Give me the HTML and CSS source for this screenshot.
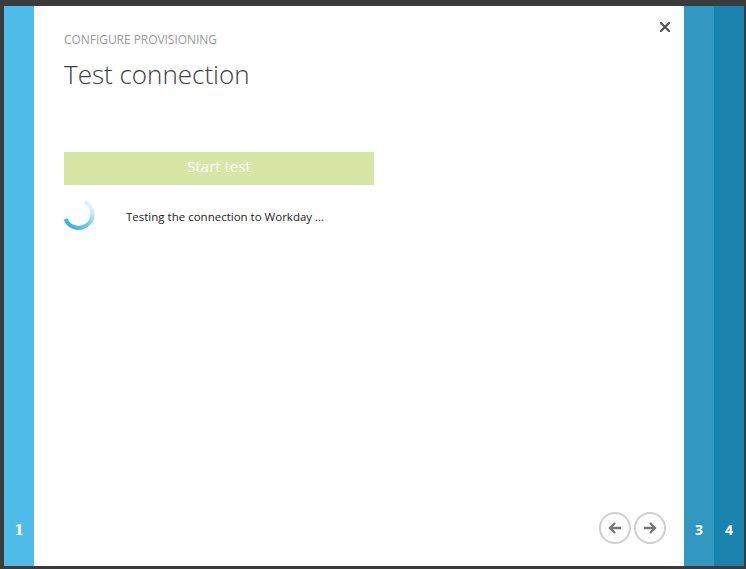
FILE: index.html
```html
<!DOCTYPE html>
<html>
<head>
<meta charset="utf-8">
<link rel="stylesheet" href="styles.css">
</head>
<body>
<div class="frame">
  <div class="step step-1"><span class="num">1</span></div>
  <div class="content">
    <button class="close" aria-label="Close">
      <svg width="10" height="10" viewBox="0 0 10 10"><path d="M1 1 L9 9 M9 1 L1 9" stroke="#555" stroke-width="2.2" stroke-linecap="square"/></svg>
    </button>
    <div class="eyebrow">CONFIGURE PROVISIONING</div>
    <h1 class="title">Test connection</h1>
    <button class="start">Start test</button>
    <div class="status">
      <svg class="spinner" width="36" height="36" viewBox="0 0 36 36">
        <defs>
          <linearGradient id="g" x1="1" y1="0" x2="0" y2="1">
            <stop offset="0" stop-color="#4cc0ee" stop-opacity="0"/>
            <stop offset="0.5" stop-color="#4cc0ee" stop-opacity="0.8"/>
            <stop offset="1" stop-color="#29a8e6"/>
          </linearGradient>
        </defs>
        <path d="M23 4.5 A14 14 0 1 1 3.5 22" fill="none" stroke="url(#g)" stroke-width="4"/>
      </svg>
      <span class="status-text">Testing the connection to Workday ...</span>
    </div>
    <div class="spacer"></div>
    <div class="nav">
      <button class="nav-btn" aria-label="Back">
        <svg width="16" height="16" viewBox="0 0 16 16"><path d="M14 8 H3 M8 3 L3 8 L8 13" fill="none" stroke="#777" stroke-width="2.4"/></svg>
      </button>
      <button class="nav-btn" aria-label="Next">
        <svg width="16" height="16" viewBox="0 0 16 16"><path d="M2 8 H13 M8 3 L13 8 L8 13" fill="none" stroke="#777" stroke-width="2.4"/></svg>
      </button>
    </div>
  </div>
  <div class="step step-3"><span class="num">3</span></div>
  <div class="step step-4"><span class="num">4</span></div>
</div>
</body>
</html>
```
FILE: styles.css
```css
html, body {
  margin: 0;
  padding: 0;
  background: #3b3b3b;
}
.frame {
  box-sizing: border-box;
  width: 746px;
  height: 569px;
  padding: 6px 2px 3px 4px;
  display: flex;
  font-family: "Open Sans", "Noto Sans", sans-serif;
}
.step {
  width: 30px;
  display: flex;
  flex-direction: column;
  justify-content: flex-end;
  align-items: center;
  padding-bottom: 26px;
  box-sizing: border-box;
}
.step-1 { background: #4fbbe9; }
.step-3 { background: #3298c2; }
.step-4 { background: #1a83ad; }
.num {
  color: #fff;
  font-weight: 700;
  font-size: 14px;
  line-height: 20px;
}
.step-1 .num { font-family: "DejaVu Serif", serif; font-size: 14px; }
.content {
  position: relative;
  flex: 1;
  background: #fff;
  display: flex;
  flex-direction: column;
  padding: 27px 18px 22px 30px;
  box-sizing: border-box;
}
.close {
  position: absolute;
  top: 16px;
  right: 14px;
  border: 0;
  background: transparent;
  padding: 0;
  width: 10px;
  height: 10px;
  display: flex;
}
.eyebrow {
  color: #9a9a9a;
  font-size: 12px;
  line-height: 14px;
  letter-spacing: -0.05px;
}
.title {
  margin: 11px 0 0;
  font-weight: 300;
  font-size: 26px;
  line-height: 32px;
  color: #404040;
}
.start {
  margin-top: 62px;
  width: 310px;
  height: 33px;
  border: 0;
  background: #d7e6a4;
  color: #fff;
  font-family: inherit;
  font-size: 15px;
  padding: 0 0 5px;
}
.status {
  margin-top: 12px;
  display: flex;
  align-items: center;
}
.spinner {
  margin-left: -2px;
}
.status-text {
  margin-left: 28px;
  margin-top: 2px;
  font-size: 11.5px;
  color: #222;
}
.spacer { flex: 1; }
.nav {
  display: flex;
  justify-content: flex-end;
  gap: 3px;
}
.nav-btn {
  width: 32px;
  height: 32px;
  border-radius: 50%;
  border: 2px solid #cfcfcf;
  background: #fff;
  padding: 0;
  display: flex;
  align-items: center;
  justify-content: center;
}
```
